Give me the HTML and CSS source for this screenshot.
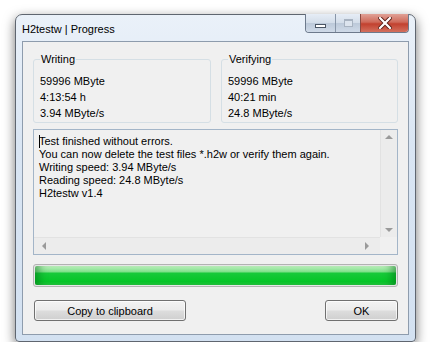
FILE: index.html
```html
<!DOCTYPE html>
<html lang="en">
<head>
<meta charset="UTF-8">
<title>H2testw | Progress</title>
<link rel="stylesheet" href="styles.css">
</head>
<body>
<div class="window">
    <div class="titlebar">
        <span class="title">H2testw | Progress</span>
        <div class="caption-buttons">
            <span class="cap cap-min"><i></i></span>
            <span class="cap cap-max"><i></i></span>
            <span class="cap cap-close">
                <svg width="14" height="12" viewBox="0 0 14 12">
                    <path d="M2 1 L12 11 M12 1 L2 11" stroke="#5a1d16" stroke-width="4" stroke-linecap="square"/>
                    <path d="M2 1 L12 11 M12 1 L2 11" stroke="#ffffff" stroke-width="2.2" stroke-linecap="square"/>
                </svg>
            </span>
        </div>
    </div>

    <div class="client">
        <div class="groups">
            <fieldset class="group">
                <legend>Writing</legend>
                <div>59996 MByte</div>
                <div>4:13:54 h</div>
                <div>3.94 MByte/s</div>
            </fieldset>
            <fieldset class="group">
                <legend>Verifying</legend>
                <div>59996 MByte</div>
                <div>40:21 min</div>
                <div>24.8 MByte/s</div>
            </fieldset>
        </div>

        <div class="log">
            <div class="log-text">
                <div><span class="caret"></span>Test finished without errors.</div>
                <div>You can now delete the test files *.h2w or verify them again.</div>
                <div>Writing speed: 3.94 MByte/s</div>
                <div>Reading speed: 24.8 MByte/s</div>
                <div>H2testw v1.4</div>
            </div>
            <div class="vscroll">
                <span class="arrow arrow-up"></span>
                <span class="arrow arrow-down"></span>
            </div>
            <div class="hscroll">
                <span class="arrow arrow-left"></span>
                <span class="arrow arrow-right"></span>
            </div>
            <div class="corner"></div>
        </div>

        <div class="progress"><div class="progress-fill"></div></div>

        <div class="buttons">
            <button class="btn btn-copy">Copy to clipboard</button>
            <button class="btn btn-ok">OK</button>
        </div>
    </div>
</div>
</body>
</html>
```

FILE: styles.css
```css
body {
    margin: 0;
    padding: 0;
    background: #ffffff;
    font-family: "Liberation Sans", Arial, sans-serif;
    font-size: 11px;
    color: #000000;
}

.window {
    box-sizing: border-box;
    width: 401px;
    height: 328px;
    margin: 14px 0 0 15px;
    border: 1px solid #5f6670;
    border-radius: 7px 7px 4px 4px;
    background: linear-gradient(#eaf1f9, #d9e5f3 40%, #d3e1f1);
    box-shadow: 0 4px 12px rgba(0, 0, 0, 0.55);
    display: flex;
    flex-direction: column;
}

/* barra de titulo */
.titlebar {
    height: 28px;
    display: flex;
    justify-content: space-between;
    align-items: flex-start;
    padding: 0 6px 0 6px;
}

.title {
    padding-top: 6px;
    line-height: 16px;
    font-size: 11px;
    color: #000;
}

.caption-buttons {
    display: flex;
    height: 18px;
    margin-top: -1px;
    border: 1px solid #6d7a8c;
    border-top: none;
    border-radius: 0 0 4px 4px;
    overflow: hidden;
}

.cap {
    display: flex;
    align-items: center;
    justify-content: center;
    height: 18px;
    background: linear-gradient(#e6edf6, #d3dde9 50%, #bcc9d9 51%, #cfdae8);
}

.cap-min {
    width: 29px;
    border-right: 1px solid #8896a8;
}

.cap-min i {
    display: block;
    width: 9px;
    height: 2px;
    margin-top: 5px;
    background: #fff;
    border: 1px solid #4a5564;
}

.cap-max {
    width: 24px;
    border-right: 1px solid #8a4a42;
}

.cap-max i {
    display: block;
    width: 7px;
    height: 5px;
    border: 1px solid #a8b3c1;
    border-top-width: 2px;
    background: #dce4ee;
}

.cap-close {
    width: 47px;
    background: linear-gradient(#e0a196, #cf6a5a 45%, #c2412f 55%, #d3705e);
}

/* area cliente */
.client {
    flex: 1;
    margin: 0 6px 6px 6px;
    border: 1px solid #8e9cad;
    background: #f0f0f0;
    padding: 10px 10px 13px 10px;
    display: flex;
    flex-direction: column;
}

.groups {
    display: grid;
    grid-template-columns: 178px 1fr;
    gap: 10px;
}

.group {
    margin: 0;
    border: 1px solid #d5dfe5;
    border-radius: 3px;
    padding: 7px 6px 1px 6px;
    line-height: 16px;
}

.group legend {
    padding: 0 1px;
    line-height: 14px;
}

/* caja de texto */
.log {
    margin-top: 6px;
    height: 126px;
    box-sizing: border-box;
    border: 1px solid #a3b5c8;
    display: grid;
    grid-template-columns: 1fr 17px;
    grid-template-rows: 1fr 17px;
}

.log-text {
    padding: 5px 5px 0 5px;
    line-height: 13px;
    white-space: nowrap;
    overflow: hidden;
}

.caret {
    display: inline-block;
    width: 1px;
    height: 13px;
    margin-right: -1px;
    vertical-align: top;
    background: #000;
}

.vscroll {
    position: relative;
    background: #ececec;
    border-left: 1px solid #e2e2e2;
}

.hscroll {
    position: relative;
    background: #ececec;
    border-top: 1px solid #e2e2e2;
}

.corner {
    background: #f0f0f0;
}

.arrow {
    position: absolute;
    width: 0;
    height: 0;
    border: 4px solid transparent;
}

.arrow-up {
    left: 4px;
    top: 5px;
    border-bottom: 4px solid #9a9a9a;
    border-top-width: 0;
}

.arrow-down {
    left: 4px;
    bottom: 5px;
    border-top: 4px solid #9a9a9a;
    border-bottom-width: 0;
}

.arrow-left {
    left: 8px;
    top: 4px;
    border-right: 4px solid #9a9a9a;
    border-left-width: 0;
}

.arrow-right {
    right: 11px;
    top: 4px;
    border-left: 4px solid #9a9a9a;
    border-right-width: 0;
}

/* barra de progreso */
.progress {
    margin-top: 9px;
    height: 23px;
    box-sizing: border-box;
    border: 1px solid #b2b2b2;
    border-radius: 3px;
    background: #e6e6e6;
    padding: 1px;
}

.progress-fill {
    height: 100%;
    border-radius: 2px;
    background: linear-gradient(#c5f5c5, #7fe08a 30%, #17c93a 38%, #06c628 80%, #22c53f);
    box-shadow: inset 10px 0 8px -6px rgba(0, 110, 20, 0.55), inset -10px 0 8px -6px rgba(0, 110, 20, 0.55);
}

/* botones */
.buttons {
    margin-top: 13px;
    display: flex;
    justify-content: space-between;
    padding: 0 0 0 1px;
}

.btn {
    height: 21px;
    padding: 0;
    font-family: inherit;
    font-size: 11px;
    color: #000;
    border: 1px solid #707070;
    border-radius: 3px;
    background: linear-gradient(#f3f3f3, #ebebeb 48%, #dddddd 52%, #cfcfcf);
    box-shadow: inset 0 0 0 1px rgba(255, 255, 255, 0.7);
}

.btn-copy {
    width: 152px;
}

.btn-ok {
    width: 73px;
}
```
